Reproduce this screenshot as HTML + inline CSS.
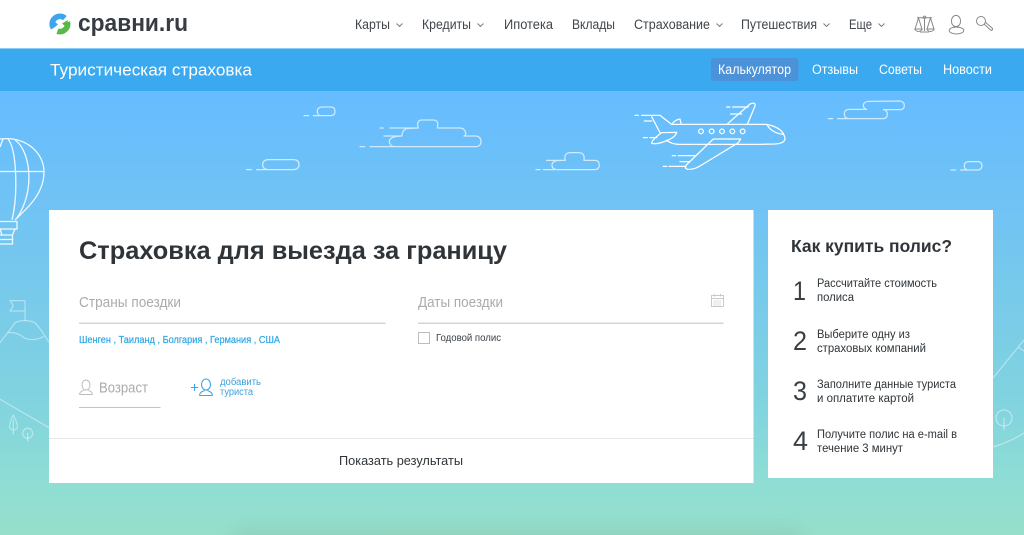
<!DOCTYPE html>
<html lang="ru">
<head>
<meta charset="utf-8">
<title>Туристическая страховка</title>
<style>
html,body{margin:0;padding:0;width:1024px;height:535px;overflow:hidden;background:#66bcff}
svg{display:block;filter:blur(.35px)}
text{font-family:"Liberation Sans","DejaVu Sans",sans-serif}
.n{font-size:13.5px;fill:#3f454b}
.w{font-size:13.5px;fill:#fff}
.s{font-size:11.5px;fill:#2f3438}
.d{font-size:27px;fill:#3a3f44}
.ph{font-size:15px;fill:#a9abad}
.ch{fill:none;stroke:#777;stroke-width:.9}
.ic{fill:none;stroke:#888;stroke-width:1}
</style>
</head>
<body>
<svg width="1024" height="535" viewBox="0 0 1024 535" xmlns="http://www.w3.org/2000/svg">
<defs>
<linearGradient id="bg" x1="0" y1="91" x2="0" y2="535" gradientUnits="userSpaceOnUse">
<stop offset="0" stop-color="#66bcff"/>
<stop offset=".3" stop-color="#72c4f2"/>
<stop offset=".7" stop-color="#81d3df"/>
<stop offset=".88" stop-color="#8fddd5"/>
<stop offset="1" stop-color="#96dfcb"/>
</linearGradient>
<filter id="b" x="-20%" y="-200%" width="140%" height="500%"><feGaussianBlur stdDeviation="9"/></filter>
</defs>

<rect x="-2" y="-2" width="1028" height="539" fill="url(#bg)"/>
<rect x="232" y="530" width="570" height="30" fill="#88c8b2" opacity=".65" filter="url(#b)"/>

<!-- header -->
<rect x="-2" y="-2" width="1028" height="50" fill="#fff"/>
<rect x="-2" y="48" width="1028" height="1" fill="#8ccdf7"/>
<rect x="-2" y="49" width="1028" height="42" fill="#3ba9f0"/>

<!-- logo -->
<path d="M53.300 27.900A7.700 7.700 0 0 1 64.900 18.100" fill="none" stroke="#3fa4ee" stroke-width="5.600"/>
<path d="M67.400 22A7.700 7.700 0 0 1 57.400 31.200" fill="none" stroke="#58b947" stroke-width="5.600"/>
<path d="M52 29L58 24.500L54 21z" fill="#3fa4ee"/>
<path d="M68 20L62 23.500L66 27z" fill="#58b947"/>
<text x="78" y="31" font-size="24" font-weight="700" fill="#363c42" textLength="110" lengthAdjust="spacingAndGlyphs">сравни.ru</text>

<!-- nav -->
<text class="n" x="355" y="29" textLength="35" lengthAdjust="spacingAndGlyphs">Карты</text>
<text class="n" x="422" y="29" textLength="49" lengthAdjust="spacingAndGlyphs">Кредиты</text>
<text class="n" x="504" y="29" textLength="49" lengthAdjust="spacingAndGlyphs">Ипотека</text>
<text class="n" x="572" y="29" textLength="43" lengthAdjust="spacingAndGlyphs">Вклады</text>
<text class="n" x="634" y="29" textLength="76" lengthAdjust="spacingAndGlyphs">Страхование</text>
<text class="n" x="741" y="29" textLength="76" lengthAdjust="spacingAndGlyphs">Путешествия</text>
<text class="n" x="849" y="29" textLength="23" lengthAdjust="spacingAndGlyphs">Еще</text>
<path class="ch" d="M396.500 23.500l3 3 3-3M477.500 23.500l3 3 3-3M716.500 23.500l3 3 3-3M823.500 23.500l3 3 3-3M878.500 23.500l3 3 3-3"/>

<!-- header icons -->
<g class="ic">
<path d="M917 17.700h15M924.500 18.500V31M920 32h9"/>
<circle cx="924.500" cy="17.300" r="1.200"/>
<path d="M918.500 18l-3.500 11h7zM930.500 18l-3.500 11h7z"/>
<path d="M914.500 29q4 5 8 0M926.500 29q4 5 8 0"/>
<ellipse cx="956" cy="21" rx="4.600" ry="5.600"/>
<path d="M954 26v2M958 26v2"/>
<ellipse cx="956.500" cy="30.500" rx="7.300" ry="3.500"/>
<circle cx="981" cy="21" r="4.500"/>
<path d="M984 24l6 5.500q1.500 1.500 2.300.3t-.8-2.300l-5.800-5"/>
</g>

<!-- sub nav -->
<text x="50" y="75.500" font-size="17" fill="#fff" textLength="202" lengthAdjust="spacingAndGlyphs">Туристическая страховка</text>
<rect x="711" y="58" width="87.500" height="23" rx="3" fill="#4b92d8"/>
<text class="w" x="718" y="74" textLength="73" lengthAdjust="spacingAndGlyphs">Калькулятор</text>
<text class="w" x="812" y="74" textLength="46" lengthAdjust="spacingAndGlyphs">Отзывы</text>
<text class="w" x="879" y="74" textLength="43" lengthAdjust="spacingAndGlyphs">Советы</text>
<text class="w" x="943" y="74" textLength="49" lengthAdjust="spacingAndGlyphs">Новости</text>

<!-- plane -->
<g transform="translate(600 90) scale(.3333)" fill="none" stroke="#fff" stroke-width="3.800" stroke-linecap="round" stroke-linejoin="round">
<path d="M125 76H180L215 103H500Q550 113 555 145Q555 160 525 162L480 163H240Q215 163 200 151"/>
<path d="M180 128L155 80"/>
<path d="M218 100Q225 90 240 87L243 100"/>
<path d="M383 101L450 42Q468 35 465 48L442 103"/>
<path d="M340 147H422L415 158L300 228Q280 240 262 238Q250 232 262 222Z"/>
<path d="M185 128L230 127Q228 140 205 150Q170 165 155 160Q155 150 185 128Z"/>
<path d="M502 106Q515 128 548 133"/>
<circle cx="303" cy="124" r="7"/><circle cx="335" cy="124" r="7"/><circle cx="366" cy="124" r="7"/><circle cx="397" cy="124" r="7"/><circle cx="428" cy="124" r="7"/>
<path d="M105 76h10M133 93h22M130 143h12M150 143h20M380 51h10M398 51h47M392 72h33M217 197h10M235 197h50M240 215h30M190 229h10M207 229h51"/>
</g>

<!-- clouds -->
<g fill="none" stroke="#fff" stroke-opacity=".68" stroke-width="3.800" stroke-linecap="round" stroke-linejoin="round">
<g transform="translate(600 90) scale(.3333)">
<path d="M685 86h13M713 86H848Q862 86 862 72Q862 60 850 59H900Q913 59 913 46Q913 35 900 33L805 34Q790 36 790 46Q790 55 800 58H748Q733 58 733 72Q733 84 745 86"/>
<path d="M1053 240h14M1082 240h53Q1146 238 1146 227Q1146 215 1133 215H1105Q1093 216 1093 228Q1093 238 1103 240"/>
</g>
<g transform="translate(230 90) scale(.3333)">
<path d="M222 77h14M250 77H303Q315 76 315 64Q315 51 302 51H275Q262 52 262 64Q262 74 270 77"/>
<path d="M390 170h14M420 170H740Q753 168 753 155Q753 140 738 138H702Q710 135 706 125Q702 114 690 114H622Q628 90 610 90H575Q558 92 565 114H480M450 114h10M565 114L530 116Q516 120 516 138H462M516 138L495 140Q478 145 478 155Q480 168 492 170"/>
<path d="M50 239h14M80 239H190Q207 238 207 224Q207 209 190 209H115Q98 210 98 224Q98 238 115 239"/>
<path d="M918 239h12M940 239H1095Q1108 238 1108 225Q1108 211 1095 211H1062Q1066 188 1045 188H1020Q1000 190 1006 211H950M1006 211L980 212Q966 215 966 226Q967 238 980 239"/>
</g>
</g>

<!-- balloon -->
<g fill="none" stroke="#fff" stroke-opacity=".9" stroke-width="1.300">
<path d="M0 139C25 136 44 152 44 172C44 195 25 210 15 220"/>
<path d="M8 139C17 150 18 195 12 220"/>
<path d="M15 140C30 150 36 190 17 218"/>
<path d="M3 139L0 147M0 171.500H43.500"/>
<path d="M-2 221.500H17V229H-2zM0 229L2 235M15 229L12.500 235M-2 235H12.500V244H-2zM-2 239.500H12.500"/>
</g>

<!-- left hills -->
<g transform="translate(0 280) scale(.3333)" fill="none" stroke="#fff" stroke-opacity=".42" stroke-width="3.800" stroke-linecap="round" stroke-linejoin="round">
<path d="M75 122V62H30L40 77L30 93H75"/>
<path d="M0 188Q30 150 45 128Q75 115 105 128Q125 150 147 187"/>
<path d="M25 158Q50 155 75 175Q100 185 130 170"/>
<path d="M0 358L147 443"/>
<path d="M40 405Q25 435 30 445Q40 455 52 445Q55 435 40 405ZM40 420V462"/>
<circle cx="83" cy="460" r="15"/>
<path d="M83 460V483"/>
</g>

<!-- right hills -->
<g fill="none" stroke="#fff" stroke-opacity=".42" stroke-width="1.300">
<path d="M993 378L1024 340M1018 347L1024 351"/>
<circle cx="1004" cy="418" r="8"/>
<path d="M1004 418V430M993 447Q1010 442 1024 433"/>
</g>

<!-- main card -->
<rect x="49" y="210" width="704.500" height="273" fill="#fff"/>
<text x="79" y="259" font-size="25" font-weight="700" fill="#2f3438" textLength="428" lengthAdjust="spacingAndGlyphs">Страховка для выезда за границу</text>

<text class="ph" x="79" y="307" textLength="102" lengthAdjust="spacingAndGlyphs">Страны поездки</text>
<rect x="79" y="322.500" width="306.500" height="1.500" fill="#d4d4d4"/>
<text x="79" y="343" font-size="10" fill="#2ea7e6" stroke="#2ea7e6" stroke-width=".2" textLength="201" lengthAdjust="spacingAndGlyphs">Шенген , Таиланд , Болгария , Германия , США</text>

<text class="ph" x="418" y="307" textLength="85" lengthAdjust="spacingAndGlyphs">Даты поездки</text>
<g fill="none" stroke="#c9c9c9" stroke-width="1">
<path d="M711.500 295.500h12v11h-12zM711.500 298.500h12M714.500 294v2.500M720.500 294v2.500"/>
<path d="M713.500 301h8M713.500 303h8M713.500 305h8" stroke-dasharray="1.200 .8"/>
</g>
<rect x="418" y="322.500" width="305.500" height="1.500" fill="#d4d4d4"/>
<rect x="418.500" y="332.500" width="11" height="11" fill="#fff" stroke="#bdbdbd"/>
<text x="436" y="341" font-size="10" fill="#3b4046" textLength="65" lengthAdjust="spacingAndGlyphs">Годовой полис</text>

<g fill="none" stroke="#bdbdbd" stroke-width="1">
<ellipse cx="86" cy="385" rx="4" ry="5"/>
<path d="M79.500 394.500c0-3 3-3.500 4.500-4.500M92.500 394.500c0-3-3-3.500-4.500-4.500M79.500 394.500h13"/>
</g>
<text class="ph" x="99" y="392.500" textLength="49" lengthAdjust="spacingAndGlyphs">Возраст</text>
<rect x="79" y="407" width="81.500" height="1" fill="#c4c4c4"/>

<g fill="none" stroke="#3ea6e6" stroke-width="1.100">
<path d="M191 387.500h7M194.500 384v7"/>
<ellipse cx="206" cy="384.500" rx="4.500" ry="5.500"/>
<path d="M199.500 395.500c0-3.500 3.500-4 5-5M212.500 395.500c0-3.500-3.500-4-5-5M199.500 395.500h13"/>
</g>
<text x="220" y="385" font-size="10" fill="#3ea0dc" textLength="41" lengthAdjust="spacingAndGlyphs">добавить</text>
<text x="220" y="395" font-size="10" fill="#3ea0dc" textLength="33" lengthAdjust="spacingAndGlyphs">туриста</text>

<rect x="49" y="438" width="704.500" height="1" fill="#e6e6e6"/>
<text x="339" y="465" font-size="13" fill="#2f3438" textLength="124" lengthAdjust="spacingAndGlyphs">Показать результаты</text>

<!-- right card -->
<rect x="768" y="210" width="225" height="268" fill="#fff"/>
<text x="791" y="252" font-size="17.500" font-weight="700" fill="#2f3438" textLength="161" lengthAdjust="spacingAndGlyphs">Как купить полис?</text>

<text class="d" x="793" y="300" textLength="13" lengthAdjust="spacingAndGlyphs">1</text>
<text class="s" x="817" y="287" textLength="120" lengthAdjust="spacingAndGlyphs">Рассчитайте стоимость</text>
<text class="s" x="817" y="301" textLength="37" lengthAdjust="spacingAndGlyphs">полиса</text>

<text class="d" x="793" y="350" textLength="14" lengthAdjust="spacingAndGlyphs">2</text>
<text class="s" x="817" y="338" textLength="93" lengthAdjust="spacingAndGlyphs">Выберите одну из</text>
<text class="s" x="817" y="352" textLength="109" lengthAdjust="spacingAndGlyphs">страховых компаний</text>

<text class="d" x="793" y="400" textLength="14" lengthAdjust="spacingAndGlyphs">3</text>
<text class="s" x="817" y="388" textLength="139" lengthAdjust="spacingAndGlyphs">Заполните данные туриста</text>
<text class="s" x="817" y="402" textLength="97" lengthAdjust="spacingAndGlyphs">и оплатите картой</text>

<text class="d" x="793" y="450" textLength="15" lengthAdjust="spacingAndGlyphs">4</text>
<text class="s" x="817" y="438" textLength="140" lengthAdjust="spacingAndGlyphs">Получите полис на e-mail в</text>
<text class="s" x="817" y="452" textLength="86" lengthAdjust="spacingAndGlyphs">течение 3 минут</text>
</svg>
</body>
</html>
